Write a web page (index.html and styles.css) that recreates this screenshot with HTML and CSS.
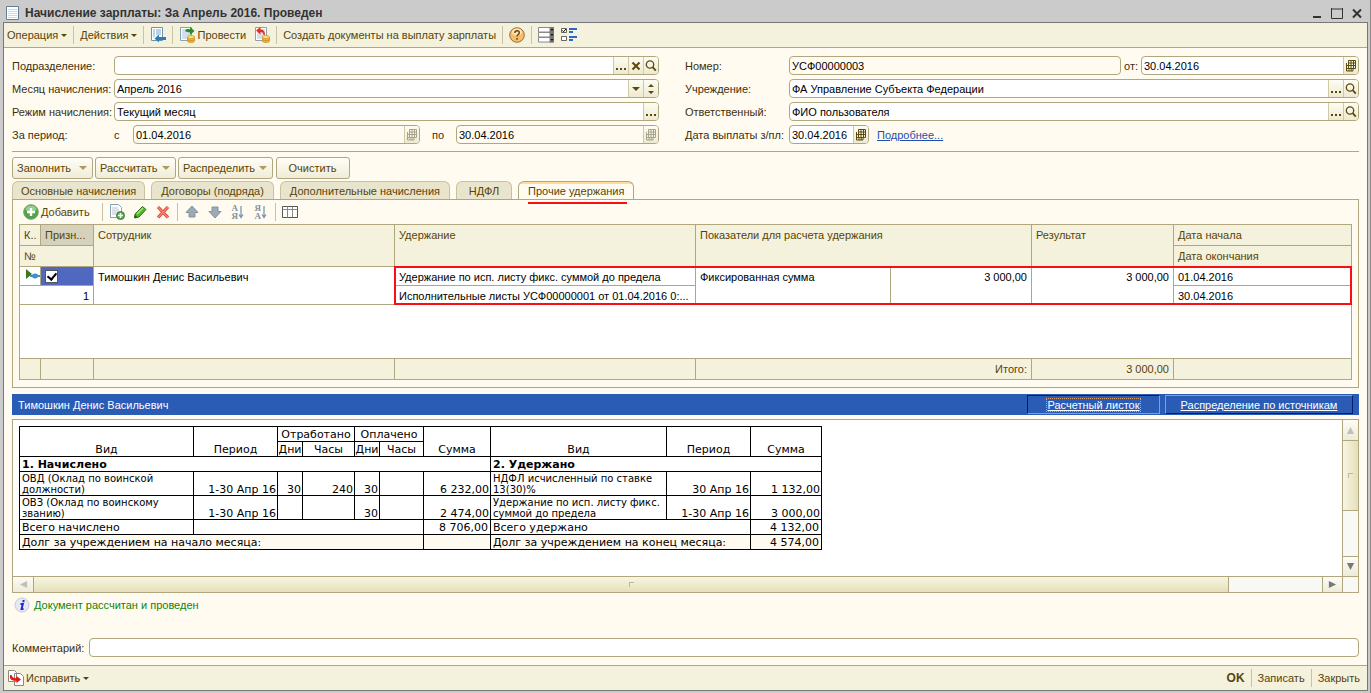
FILE: index.html
```html
<!DOCTYPE html>
<html lang="ru">
<head>
<meta charset="utf-8">
<title>Начисление зарплаты: За Апрель 2016. Проведен</title>
<link rel="stylesheet" href="styles.css">
</head>
<body>
<svg class="defs" aria-hidden="true">
  <symbol id="i-lens" viewBox="0 0 12 12"><circle cx="5" cy="4.500" r="3.700" fill="none" stroke="#5c4a0c" stroke-width="1.300"/><path d="M7.700 7.200 10.800 10.600" stroke="#5c4a0c" stroke-width="1.800"/></symbol>
  <symbol id="i-cal" viewBox="0 0 12 12"><path d="M3.500.500h7v8h-7zM3.500 3h7M3.500 5.500h7M6 .5v8M8.500.500v8M1.500 3v8h6.500v-2M1.500 5.500h2M1.500 8.500h2M4 8.500v2.500M6.200 8.500v2.500" fill="none" stroke="currentColor"/></symbol>
  <symbol id="i-dots" viewBox="0 0 12 12"><path d="M1 8h2v2H1zM5 8h2v2H5zM9 8h2v2H9z" fill="#5c4a0c"/></symbol>
  <symbol id="i-page" viewBox="0 0 16 16"><path d="M1.500.5h11v13h-11z" fill="#fff" stroke="#8aa0b4"/><path d="M3 3h8M3 5h8M3 7h8M3 9h8M3 11h5" stroke="#a9bfd4"/></symbol>
  <symbol id="i-coins" viewBox="0 0 16 16"><path d="M8.500 10v4c0 2 7 2 7 0v-4z" fill="#f0b532" stroke="#c28413" stroke-width=".6"/><ellipse cx="12" cy="10" rx="3.500" ry="1.500" fill="#ffe28a" stroke="#c28413" stroke-width=".6"/><path d="M8.500 12c0 2 7 2 7 0" fill="none" stroke="#c28413" stroke-width=".7"/></symbol>
</svg>
<div class="window">
  <header class="titlebar">
    <svg class="title-icon" viewBox="0 0 13 14"><path d="M.5.500h12v13H.500z" fill="#fff" stroke="#5f8098"/><path d="M2 3.500h9M2 5.500h9M2 7.500h9M2 9.500h9M2 11.500h9" stroke="#c5dcec"/></svg>
    <h1>Начисление зарплаты: За Апрель 2016. Проведен</h1>
    <button class="winbtn" aria-label="Свернуть"><svg viewBox="0 0 12 12"><path d="M2 10h8" stroke="#333" stroke-width="2"/></svg></button>
    <button class="winbtn" aria-label="Развернуть"><svg viewBox="0 0 12 12"><path d="M.5 2h11M.5 1v10.500h11V1" fill="none" stroke="#333"/></svg></button>
    <button class="winbtn" aria-label="Закрыть окно"><svg viewBox="0 0 12 12"><path d="M2 2.500 10 10.500M10 2.500 2 10.500" stroke="#333" stroke-width="2"/></svg></button>
  </header>

  <div class="client">
    <div class="toolbar" role="toolbar">
      <button class="tool">Операция<i class="caret"></i></button><i class="sep"></i>
      <button class="tool">Действия<i class="caret"></i></button><i class="sep"></i>
      <button class="tool" aria-label="Перечитать"><svg class="ic" viewBox="0 0 16 16"><path d="M1.500.5h11v13h-11z" fill="#fff" stroke="#6d93b2"/><path d="M3 3h2M6 3h5M3 5h2M6 5h5M3 7h2M6 7h5M3 9h2" stroke="#7ba3c4"/><path d="M4.500 11.500 9 7.500v2.500h7v3H9v2.500z" fill="#2d7db5"/></svg></button><i class="sep"></i>
      <button class="tool"><svg class="ic" viewBox="0 0 16 16"><use href="#i-page"/><path d="M6 4c1-2 3-2.500 5-1.500V0l4.500 4L11 8V5.500C9 5 7 5 6 4z" fill="#2a8b2f"/><use href="#i-coins"/></svg><span class="gap">Провести</span></button>
      <button class="tool unpost" aria-label="Отмена проведения"><svg class="ic" viewBox="0 0 16 16"><use href="#i-page"/><path d="M2 3.500 6.500 0v2.500c3 0 4.500 2 4.500 5.500H9.500C9.500 6 8.500 5 6.500 5v2.500z" fill="#e03020"/><use href="#i-coins"/></svg></button><i class="sep"></i>
      <button class="tool">Создать документы на выплату зарплаты</button><i class="sep"></i>
      <button class="tool" aria-label="Справка"><svg class="ic" viewBox="0 0 16 16"><circle cx="8" cy="8" r="7.300" fill="#f9bd68" stroke="#8e6f4b"/><ellipse cx="8" cy="5" rx="5" ry="3.500" fill="#fde3b6"/><path d="M5.800 6c0-3 4.500-3 4.500-.3C10.300 7.500 8 7.500 8 9.500M8 11v1.800" fill="none" stroke="#6d4617" stroke-width="1.500"/></svg></button><i class="sep"></i>
      <button class="tool" aria-label="Поля"><svg class="ic" viewBox="0 0 16 16"><path d="M.5.500h15v4.500H.500zM.500 5.500h15v4.500H.500zM.500 10.500h15v4.500H.500z" fill="#fff" stroke="#8a8a8a"/><path d="M11.500 0h4.500v15.500h-4.500z" fill="#777"/><path d="M12.500 2h3l-1.500 2zM12.500 7h3l-1.500 2zM12.500 12h3l-1.500 2z" fill="#111"/></svg></button>
      <button class="tool list" aria-label="Настройка списка"><svg class="ic" viewBox="0 0 16 16"><path d="M.5 1.500h5v4h-5zM.500 9.500h5v4h-5z" fill="#fff" stroke="#666"/><path d="M1.500 3.500 2.500 4.800 5 2" fill="none" stroke="#000"/><path d="M8 2h8M8 5h4M8 10h8M8 13h4" stroke="#2d65c8" stroke-width="2"/></svg></button>
    </div>

    <main class="content">
      <form class="form">
        <div class="col">
          <div class="row"><label class="lbl" for="dep">Подразделение:</label>
            <div class="field"><input id="dep"><button type="button" aria-label="Выбрать"><svg><use href="#i-dots"/></svg></button><button type="button" aria-label="Очистить поле"><svg viewBox="0 0 12 12"><path d="M2.500 2.500 9.500 9.500M9.500 2.500 2.500 9.500" stroke="#5c4a0c" stroke-width="2"/></svg></button><button type="button" aria-label="Открыть"><svg><use href="#i-lens"/></svg></button></div></div>
          <div class="row"><label class="lbl" for="month">Месяц начисления:</label>
            <div class="field"><input id="month" value="Апрель 2016"><button type="button" aria-label="Список"><svg viewBox="0 0 12 12"><path d="M2 4h8L6 8z" fill="#5c4a0c"/></svg></button><button type="button" aria-label="Больше или меньше"><svg viewBox="0 0 12 12"><path d="M3 4 6 1l3 3zM3 8l3 3 3-3z" fill="#5c4a0c"/></svg></button></div></div>
          <div class="row"><label class="lbl" for="mode">Режим начисления:</label>
            <div class="field"><input id="mode" value="Текущий месяц"><button type="button" aria-label="Выбрать"><svg><use href="#i-dots"/></svg></button></div></div>
          <div class="row"><span class="lbl">За период:</span><label class="from" for="d1">с</label>
            <div class="field off"><input id="d1" value="01.04.2016" readonly><button type="button" aria-label="Календарь"><svg><use href="#i-cal"/></svg></button></div>
            <label class="to" for="d2">по</label>
            <div class="field off narrow"><input id="d2" value="30.04.2016" readonly><button type="button" aria-label="Календарь"><svg><use href="#i-cal"/></svg></button></div></div>
        </div>
        <div class="col right">
          <div class="row"><label class="lbl" for="num">Номер:</label>
            <div class="field off"><input id="num" value="УСФ00000003" readonly></div>
            <label class="of" for="date">от:</label>
            <div class="field docdate"><input id="date" value="30.04.2016"><button type="button" aria-label="Календарь"><svg><use href="#i-cal"/></svg></button></div></div>
          <div class="row"><label class="lbl" for="org">Учреждение:</label>
            <div class="field"><input id="org" value="ФА Управление Субъекта Федерации"><button type="button" aria-label="Выбрать"><svg><use href="#i-dots"/></svg></button><button type="button" aria-label="Открыть"><svg><use href="#i-lens"/></svg></button></div></div>
          <div class="row"><label class="lbl" for="resp">Ответственный:</label>
            <div class="field"><input id="resp" value="ФИО пользователя"><button type="button" aria-label="Выбрать"><svg><use href="#i-dots"/></svg></button><button type="button" aria-label="Открыть"><svg><use href="#i-lens"/></svg></button></div></div>
          <div class="row"><label class="lbl" for="pay">Дата выплаты з/пл:</label>
            <div class="field pay"><input id="pay" value="30.04.2016"><button type="button" aria-label="Календарь"><svg><use href="#i-cal"/></svg></button></div>
            <a class="more" href="#">Подробнее...</a></div>
        </div>
      </form>

      <div class="actions">
        <button class="btn">Заполнить<i class="caret"></i></button>
        <button class="btn">Рассчитать<i class="caret"></i></button>
        <button class="btn wide">Распределить<i class="caret"></i></button>
        <button class="btn plain">Очистить</button>
      </div>

      <div class="tabs" role="tablist">
        <button class="tab" role="tab">Основные начисления</button>
        <button class="tab" role="tab">Договоры (подряда)</button>
        <button class="tab" role="tab">Дополнительные начисления</button>
        <button class="tab" role="tab">НДФЛ</button>
        <button class="tab active" role="tab" aria-selected="true"><span>Прочие удержания</span></button>
      </div>

      <section class="panel">
        <div class="subbar" role="toolbar">
          <button class="tool add"><svg class="ic" viewBox="0 0 16 16"><circle cx="8" cy="8" r="7.300" fill="#4fa548" stroke="#7d9a78"/><ellipse cx="8" cy="5" rx="5.500" ry="3.500" fill="#90cf88"/><path d="M8 4v8M4 8h8" stroke="#fff" stroke-width="2.400"/></svg><span class="gap"><u>Д</u>обавить</span></button><i class="sep"></i>
          <button class="tool" aria-label="Скопировать"><svg class="ic" viewBox="0 0 16 16"><path d="M1.500.5h8l3 3v10h-11z" fill="#fff" stroke="#8aa0b4"/><path d="M3 4h6M3 6h7M3 8h6M3 10h4" stroke="#b4c6d6"/><circle cx="11.500" cy="11.500" r="4" fill="#55a84e" stroke="#49783f"/><path d="M11.500 9v5M9 11.500h5" stroke="#fff" stroke-width="1.500"/></svg></button>
          <button class="tool" aria-label="Изменить"><svg class="ic" viewBox="0 0 16 16"><path d="m3 10 7.500-7.500 3.500 3L7 13l-4.500 1z" fill="#52b52c" stroke="#2b7516"/><path d="m5 10 6-6" stroke="#a5e77f" stroke-width="1.500"/><path d="m2.500 14 .5-3 2.500 2.300z" fill="#264d19"/></svg></button>
          <button class="tool" aria-label="Удалить"><svg class="ic" viewBox="0 0 16 16"><path d="m3 3 10 10.500M13 3 3 13.500" stroke="#d04636" stroke-width="3.200"/><path d="m3 3 10 10.500M13 3 3 13.500" stroke="#ff8270" stroke-width="1.400"/></svg></button><i class="sep"></i>
          <button class="tool" aria-label="Вверх"><svg class="ic" viewBox="0 0 16 16"><path d="M8 2l6 6.500h-3V13H5V8.500H2z" fill="#9aabb4" stroke="#84959f"/></svg></button>
          <button class="tool" aria-label="Вниз"><svg class="ic" viewBox="0 0 16 16"><path d="M8 14l6-6.500h-3V3H5v4.500H2z" fill="#9aabb4" stroke="#84959f"/></svg></button>
          <button class="tool sort" aria-label="По возрастанию"><span>А<br>Я</span><svg viewBox="0 0 6 14"><path d="M3 1v11M1 9.500 3 12.500 5 9.500" fill="none" stroke="#7f96a8" stroke-width="1.300"/></svg></button>
          <button class="tool sort" aria-label="По убыванию"><span>Я<br>А</span><svg viewBox="0 0 6 14"><path d="M3 1v11M1 9.500 3 12.500 5 9.500" fill="none" stroke="#7f96a8" stroke-width="1.300"/></svg></button><i class="sep"></i>
          <button class="tool" aria-label="Колонки"><svg class="ic" viewBox="0 0 16 16"><path d="M.5 2.500h15v11H.500z" fill="#fff" stroke="#555"/><path d="M.5 5.500h15M5.500 2.500v11M10.500 2.500v11" stroke="#888"/></svg></button>
        </div>
        <div class="gridwrap">
          <table class="grid">
            <colgroup><col class="c1"><col class="c2"><col><col><col class="c5"><col class="c6"><col class="c7"><col class="c8"></colgroup>
            <thead>
              <tr><th>К..</th><th class="sel">Призн...</th><th rowspan="2">Сотрудник</th><th rowspan="2">Удержание</th><th rowspan="2" colspan="2">Показатели для расчета удержания</th><th rowspan="2">Результат</th><th>Дата начала</th></tr>
              <tr><th colspan="2">№</th><th>Дата окончания</th></tr>
            </thead>
            <tbody>
              <tr><td class="mark"><svg viewBox="0 0 15 12"><path d="M1 0 7 5 1 10z" fill="#3b7a1c"/><path d="M5 7h10" stroke="#3d92c9" stroke-width="2"/><ellipse cx="10" cy="7" rx="3" ry="2.400" fill="#3d92c9"/></svg></td><td class="cur"><input type="checkbox" checked aria-label="Признак"></td><td rowspan="2">Тимошкин Денис Васильевич</td><td>Удержание по исп. листу фикс. суммой до предела</td><td rowspan="2">Фиксированная сумма</td><td rowspan="2" class="n">3 000,00</td><td rowspan="2" class="n">3 000,00</td><td>01.04.2016</td></tr>
              <tr><td colspan="2" class="n">1</td><td>Исполнительные листы УСФ00000001 от 01.04.2016 0:...</td><td>30.04.2016</td></tr>
              <tr class="blank"><td colspan="8"></td></tr>
            </tbody>
            <tfoot><tr><td></td><td></td><td></td><td></td><td colspan="2" class="n">Итого:</td><td class="n">3 000,00</td><td></td></tr></tfoot>
          </table>
          <div class="frame"></div>
        </div>
      </section>

      <div class="bluebar">
        <span class="who">Тимошкин Денис Васильевич</span>
        <button class="link pressed"><span>Расчетный листок</span></button>
        <button class="link"><span>Распределение по источникам</span></button>
      </div>

      <section class="report">
        <div class="sheet">
          <table class="slip">
            <colgroup><col class="s1"><col class="s2"><col class="s3"><col class="s4"><col class="s3"><col class="s6"><col class="s7"><col class="s8"><col class="s2"><col class="s10"></colgroup>
            <tr><th rowspan="2">Вид</th><th rowspan="2">Период</th><th colspan="2">Отработано</th><th colspan="2">Оплачено</th><th rowspan="2">Сумма</th><th rowspan="2">Вид</th><th rowspan="2">Период</th><th rowspan="2">Сумма</th></tr>
            <tr><th>Дни</th><th>Часы</th><th>Дни</th><th>Часы</th></tr>
            <tr class="sec"><td colspan="7">1. Начислено</td><td colspan="3">2. Удержано</td></tr>
            <tr class="item"><td>ОВД (Оклад по воинской должности)</td><td class="n">1-30 Апр 16</td><td class="n">30</td><td class="n">240</td><td class="n">30</td><td></td><td class="n">6 232,00</td><td>НДФЛ исчисленный по ставке 13(30)%</td><td class="n">30 Апр 16</td><td class="n">1 132,00</td></tr>
            <tr class="item"><td>ОВЗ (Оклад по воинскому званию)</td><td class="n">1-30 Апр 16</td><td></td><td></td><td class="n">30</td><td></td><td class="n">2 474,00</td><td>Удержание по исп. листу фикс. суммой до предела</td><td class="n">1-30 Апр 16</td><td class="n">3 000,00</td></tr>
            <tr><td>Всего начислено</td><td colspan="5"></td><td class="n">8 706,00</td><td colspan="2">Всего удержано</td><td class="n">4 132,00</td></tr>
            <tr class="debt"><td colspan="6">Долг за учреждением на начало месяца:</td><td></td><td colspan="2">Долг за учреждением на конец месяца:</td><td class="n">4 574,00</td></tr>
          </table>
        </div>
        <div class="vbar"><i class="end"><svg viewBox="0 0 10 10"><path d="M1 9 5 1l4 8z" fill="#c2c0b6"/></svg></i><i class="thumb"></i><i class="track"></i><i class="end"><svg viewBox="0 0 10 10"><path d="M1 1h8L5 9z" fill="#777"/></svg></i></div>
        <div class="hbar"><i class="end"><svg viewBox="0 0 10 10"><path d="M9 1v8L1 5z" fill="#c2c0b6"/></svg></i><i class="thumb"></i><i class="track"></i><i class="end"><svg viewBox="0 0 10 10"><path d="M1 1v8l8-4z" fill="#777"/></svg></i></div>
        <div class="corner"></div>
      </section>

      <p class="status"><svg class="ic" viewBox="0 0 16 16"><circle cx="8" cy="8" r="7" fill="#e6e8f2" stroke="#c9cad4"/><path d="M9.500 3v2.200M6.500 7h2.300L7.600 12H9.500" fill="none" stroke="#1c28e0" stroke-width="2"/></svg>Документ рассчитан и проведен</p>
      <div class="comment"><label for="cm">Комментарий:</label><div class="field"><input id="cm"></div></div>
    </main>

    <footer class="bottom">
      <button class="tool fix"><svg class="ic" viewBox="0 0 16 16"><path d="M.5.500h6l2 2v9h-8zM6.500 3.500h6l3 3v9h-9z" fill="#fff" stroke="#888"/><path d="M2 5v3c1 2.500 4 3 6.500 2.500V13l4.500-3.500L8.500 6v2C6 8.500 4 7.500 3.500 5z" fill="#e8150e"/></svg>Исправить<i class="caret"></i></button>
      <span class="grow"></span>
      <button class="tool ok">OK</button><i class="sep"></i>
      <button class="tool">Записать</button><i class="sep"></i>
      <button class="tool">Закрыть</button>
    </footer>
  </div>
</div>
</body>
</html>
```
FILE: styles.css
```css
:root {
  --line: #b0a77f;
  --bar: #f4f1dd;
  --ink: #584407;
  --paper: #fffbf0;
}
* { box-sizing: border-box; }
body {
  margin: 0;
  font: 11px/14px "Liberation Sans", Arial, sans-serif;
  color: #3d300a;
  background: #cbcbcb;
}
button, input {
  font: inherit;
  color: inherit;
  margin: 0;
  padding: 0;
  border: 0;
  background: none;
}
i { font-style: normal; }
svg { display: block; flex: none; }
.defs { position: absolute; width: 0; height: 0; }

.window {
  display: flex;
  flex-direction: column;
  min-height: 100vh;
  padding: 1px 2px 3px 3px;
  border-right: 1px solid #8a8a8a;
  border-bottom: 1px solid #8a8a8a;
}
.titlebar {
  display: flex;
  align-items: center;
  height: 21px;
  padding: 2px 5px 0 3px;
}
.title-icon { width: 13px; height: 14px; }
h1 {
  flex: 1;
  margin: 0 0 0 6px;
  font: bold 12px/18px "Liberation Sans", Arial, sans-serif;
  color: #333;
}
.winbtn { width: 12px; height: 12px; margin-left: 8px; }
.winbtn svg { width: 12px; height: 12px; }

.client {
  flex: 1;
  display: flex;
  flex-direction: column;
  border: 1px solid #777;
  background: var(--paper);
}
.toolbar, .bottom, .subbar { display: flex; align-items: center; }
.toolbar {
  height: 25px;
  padding-left: 3px;
  background: var(--bar);
  border-bottom: 1px solid var(--line);
}
.tool {
  display: flex;
  align-items: center;
  color: var(--ink);
  white-space: nowrap;
}
.ic { width: 16px; height: 16px; }
.gap { margin-left: 2px; }
.caret {
  border: 3px solid transparent;
  border-top-color: currentColor;
  border-bottom: 0;
  margin-left: 3px;
}
.sep {
  width: 1px;
  height: 18px;
  margin: 0 6px;
  background: #c9c3a4;
}
.unpost { margin-left: 8px; }
.list { margin-left: 7px; }

.content {
  flex: 1;
  display: flex;
  flex-direction: column;
  padding: 8px;
}
.form {
  display: grid;
  grid-template-columns: 647fr 674fr;
  gap: 26px;
  padding-bottom: 7px;
  border-bottom: 1px solid var(--line);
}
.col { display: grid; gap: 4px; }
.row { display: flex; align-items: center; height: 19px; }
.lbl { flex: none; width: 102px; white-space: nowrap; }
.right .lbl { width: 104px; }
.field {
  flex: 1;
  display: flex;
  min-width: 0;
  height: 19px;
  border: 1px solid var(--line);
  border-radius: 4px;
  background: #fff;
  overflow: hidden;
}
.field input {
  flex: 1;
  min-width: 0;
  padding: 0 2px;
  color: #000;
  outline: 0;
}
.field button {
  display: grid;
  place-items: center;
  width: 15px;
  border-left: 1px solid #d0c9a4;
  background: linear-gradient(#fdfcf3, #eeead0);
  color: #5c4a0c;
}
.field button svg { width: 12px; height: 12px; }
.field.off { background: #fffbf0; }
.field.off button { color: #a9a38b; }
.from { width: 19px; }
.to { width: 36px; text-align: center; }
.field.off.narrow { flex: 0 0 203px; }
.of { padding: 0 3px; }
.field.docdate { flex: 0 0 218px; }
.field.pay { flex: 0 0 80px; }
.more { margin-left: 8px; color: #1f4fae; }

.actions { display: flex; gap: 2px; padding-top: 5px; }
.btn {
  display: flex;
  align-items: center;
  justify-content: space-between;
  width: 81px;
  height: 22px;
  padding: 0 5px 0 4px;
  border: 1px solid var(--line);
  border-radius: 3px;
  background: linear-gradient(#fffef8, #f0ecd6);
  color: var(--ink);
}
.btn.wide { width: 95px; }
.btn .caret { border-width: 4px 4px 0; border-top-color: #a99a68; margin: 0; }
.btn.plain { width: 74px; margin-left: 1px; justify-content: center; }

.tabs { display: flex; align-items: flex-end; gap: 6px; padding-top: 2px; }
.tab {
  min-width: 56px;
  height: 18px;
  padding: 0 8px;
  border: 1px solid #c9c2a0;
  border-bottom: 0;
  border-radius: 6px 6px 0 0;
  background: #e9e5cd;
  color: var(--ink);
  white-space: nowrap;
}
.tab + .tab { padding: 0 9px; }
.tab.active {
  height: 19px;
  margin-bottom: -1px;
  border-color: var(--line);
  background: linear-gradient(#ffdc97 2px, var(--paper) 2px);
}
.tab.active span { position: relative; display: block; }
.tab.active span::after {
  content: "";
  position: absolute;
  left: 0;
  right: -3px;
  top: 18px;
  height: 2px;
  background: #f80f14;
}
.panel { border: 1px solid var(--line); padding: 0 6px 7px; }
.subbar { height: 24px; padding-left: 4px; gap: 7px; }
.subbar .sep { margin: 0 -1px; }
.subbar .add { margin-right: 6px; }
.sort { width: 16px; justify-content: center; }
.sort span { font: bold 9px/8px "Liberation Serif", serif; color: #7f929f; }
.sort svg { width: 6px; height: 14px; }

.gridwrap { position: relative; }
.grid {
  width: 100%;
  table-layout: fixed;
  border-collapse: collapse;
  background: #fff;
  color: #000;
}
.c1 { width: 21px; }
.c2 { width: 53px; }
.c5 { width: 195px; }
.c6 { width: 141px; }
.c7 { width: 142px; }
.c8 { width: 178px; }
.grid th, .grid td {
  height: 19px;
  padding: 3px 4px 0;
  border: 1px solid var(--line);
  font-weight: normal;
  text-align: left;
  vertical-align: top;
  white-space: nowrap;
  overflow: hidden;
}
.grid th, .grid tfoot td {
  height: 21px;
  background: var(--bar);
  color: var(--ink);
}
.grid th.sel { background: #d6d1bb; }
.grid td.cur { background: #5068c0; }
.cur input {
  display: block;
  appearance: none;
  width: 13px;
  height: 13px;
  border: 1px solid #555;
  background: #fff;
}
.cur input:checked::before {
  content: "";
  display: block;
  width: 4px;
  height: 7px;
  margin-left: 3px;
  border: solid #000;
  border-width: 0 2px 2px 0;
  transform: rotate(40deg);
}
.grid td.mark { padding: 2px 0 0 5px; }
.mark svg { width: 15px; height: 12px; }
.grid td.n { text-align: right; }
.grid .blank td { height: 54px; }
.frame {
  position: absolute;
  top: 42px;
  right: 0;
  left: calc(74px + (100% - 731px) / 2);
  height: 39px;
  border: 2px solid #f80f14;
}

.bluebar {
  display: flex;
  align-items: center;
  gap: 5px;
  height: 21px;
  margin-top: 6px;
  padding: 0 6px;
  background: #2a5bb5;
  color: #fff;
}
.who { flex: 1; }
.link {
  width: 188px;
  height: 19px;
  border: 1px solid;
  border-color: #6fa0f5 #061a70 #061a70 #6fa0f5;
  text-decoration: underline;
}
.link.pressed { width: 133px; border-color: #061a70 #6fa0f5 #6fa0f5 #061a70; }
.pressed span { outline: 1px dotted #e0a060; }

.report {
  flex: 1;
  display: grid;
  grid-template: 1fr 16px / 1fr 16px;
  min-height: 174px;
  margin-top: 4px;
  border: 1px solid var(--line);
  background: #fff;
}
.sheet { padding: 6px; }
.slip {
  width: 803px;
  table-layout: fixed;
  border-collapse: collapse;
  font: 11px/12px "DejaVu Sans", Verdana, sans-serif;
  color: #000;
}
.s1 { width: 174px; }
.s2 { width: 84px; }
.s3 { width: 25px; }
.s4 { width: 52px; }
.s6 { width: 44px; }
.s7 { width: 67px; }
.s8 { width: 176px; }
.s10 { width: 71px; }
.slip th, .slip td {
  height: 15px;
  padding: 2px 2px 0;
  border: 1px solid #000;
  font-weight: normal;
  vertical-align: bottom;
  line-height: 12px;
  white-space: nowrap;
}
.slip th { padding: 2px 0 0; }
.slip .sec td { font-weight: bold; }
.slip .item td {
  height: 24px;
  padding: 0 2px;
  font-size: 10px;
  line-height: 11px;
  white-space: normal;
}
.slip .item td.n { padding: 0 1px; font-size: 11px; white-space: nowrap; }
.slip .n { text-align: right; }
.slip .debt td { background: #fffaf0; }
.vbar, .hbar { display: flex; background: #f8f8f4; }
.vbar { flex-direction: column; border-left: 1px solid var(--line); }
.hbar { border-top: 1px solid var(--line); }
.end {
  display: grid;
  place-items: center;
  flex: 0 0 20px;
  background: linear-gradient(#fdfcf6, #eeebd8);
}
.end svg { width: 9px; height: 9px; }
.thumb {
  display: grid;
  place-items: center;
  border: 0 solid var(--line);
  background: linear-gradient(#f8f6e2, #e4dfbb);
}
.thumb::after {
  content: "";
  width: 4px;
  height: 4px;
  border: solid #bdb9a0;
  border-width: 1px 0 0 1px;
}
.track { flex: 1; }
.vbar .thumb {
  flex: 0 0 71px;
  border-width: 1px 0;
  background: linear-gradient(90deg, #f8f6e2, #e4dfbb);
}
.vbar .end:last-child { border-top: 1px solid var(--line); }
.hbar .thumb { flex: 0 1 90%; border-width: 0 1px; }
.hbar .end:last-child { border-left: 1px solid var(--line); }
.corner { border: solid var(--line); border-width: 1px 0 0 1px; background: #f8f8f4; }

.status {
  display: flex;
  align-items: center;
  gap: 4px;
  margin: 4px 0 0;
  padding-left: 2px;
  color: #0a850a;
}
.comment {
  display: flex;
  align-items: center;
  gap: 5px;
  margin-top: 25px;
}
.bottom {
  height: 25px;
  padding: 0 7px 0 4px;
  border-top: 1px solid var(--line);
  background: var(--bar);
}
.fix { gap: 2px; }
.fix .caret { margin-left: 1px; }
.grow { flex: 1; }
.ok { font-weight: bold; font-size: 12px; }
```
